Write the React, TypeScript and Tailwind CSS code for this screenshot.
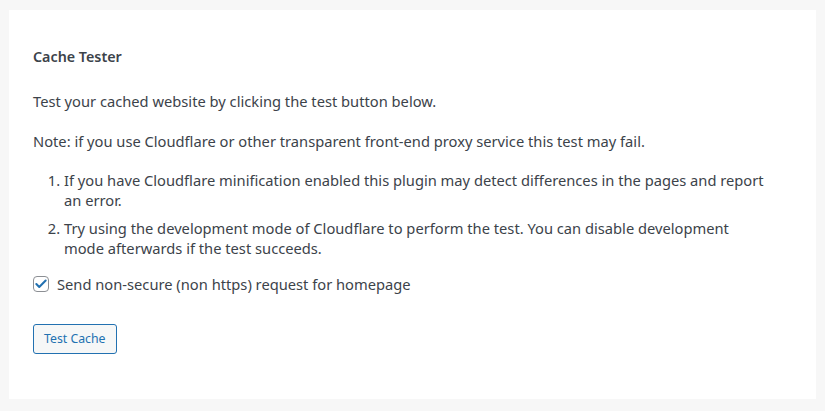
import { Check } from "lucide-react";

const font = { fontFamily: '"Noto Sans", "Open Sans", sans-serif' };

export default function App() {
  return (
    <div className="min-h-[411px] w-full bg-[#f7f7f7] px-[9px] pt-[10px] pb-[13px]" style={font}>
      <div className="bg-white px-6 pt-[37px] pb-[45px] text-[#3c434a] text-[14.7px] leading-5">
        <h2 className="font-semibold text-[14.3px] leading-5 mb-6">Cache Tester</h2>
        <p className="mb-5">Test your cached website by clicking the test button below.</p>
        <p className="mb-[19px]">
          Note: if you use Cloudflare or other transparent front-end proxy service this test may fail.
        </p>
        <ol className="list-decimal pl-[31px] pr-[18px] mb-4 flex flex-col gap-2">
          <li>
            If you have Cloudflare minification enabled this plugin may detect differences in the pages and report
            <br />
            an error.
          </li>
          <li>
            Try using the development mode of Cloudflare to perform the test. You can disable development
            <br />
            mode afterwards if the test succeeds.
          </li>
        </ol>
        <label className="flex items-center gap-2 mb-[30px]">
          <span className="flex h-4 w-4 items-center justify-center rounded-[4px] border border-[#8c8f94] bg-white">
            <Check className="h-3.5 w-3.5 text-[#2271b1]" strokeWidth={3.5} />
          </span>
          <span>Send non-secure (non https) request for homepage</span>
        </label>
        <button className="h-[30px] rounded-[3px] border border-[#2271b1] bg-[#f6f7f7] px-[10px] text-[12.3px] text-[#2271b1]">
          Test Cache
        </button>
      </div>
    </div>
  );
}
